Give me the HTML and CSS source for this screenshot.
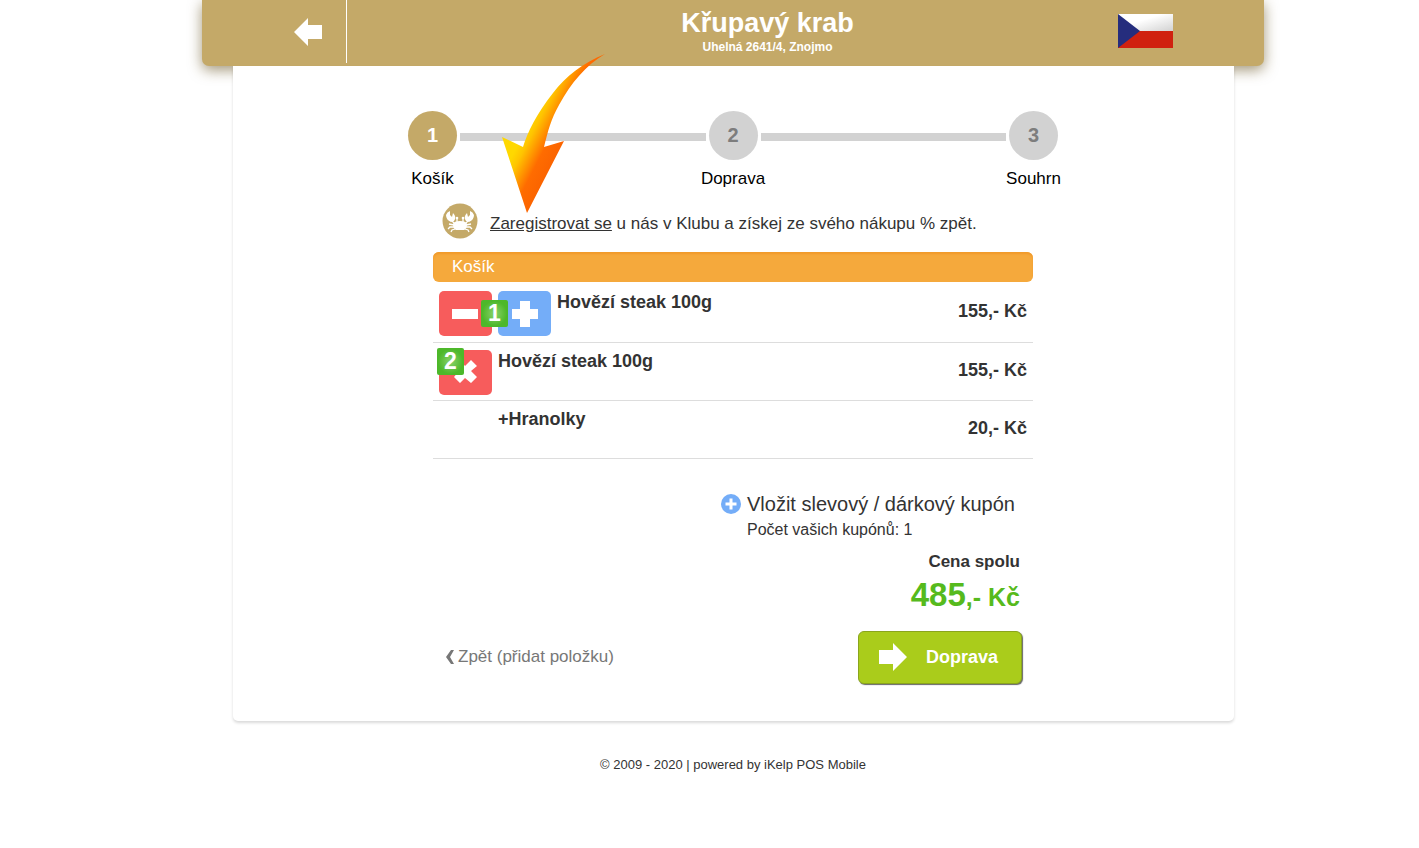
FILE: index.html
```html
<!DOCTYPE html>
<html lang="cs">
<head>
<meta charset="UTF-8">
<meta name="viewport" content="width=device-width, initial-scale=1.0">
<title>Křupavý krab - Košík</title>
<link rel="stylesheet" href="styles.css">
</head>
<body>

<header class="top">
    <a class="top-back" href="#" aria-label="Zpět">
        <svg width="30" height="28" viewBox="0 0 30 28"><path fill="#fff" d="M1 14 15 0V7H29V21H15V28Z"/></svg>
    </a>
    <div class="top-title">
        <h1>Křupavý krab</h1>
        <p>Uhelná 2641/4, Znojmo</p>
    </div>
    <button class="flag" type="button" aria-label="Čeština">
        <svg width="55" height="34" viewBox="0 0 55 34">
            <defs>
                <linearGradient id="flagWhite" x1="0" y1="0" x2="1" y2="1">
                    <stop offset=".4" stop-color="#fff"/>
                    <stop offset="1" stop-color="#d2d2d2"/>
                </linearGradient>
            </defs>
            <path fill="url(#flagWhite)" d="M0 0H55V17H0Z"/>
            <path fill="#d0210f" d="M0 17H55V34H0Z"/>
            <path fill="#252d7d" d="M0 0 22 17 0 34Z"/>
        </svg>
    </button>
</header>

<main class="card">
    <ol class="steps">
        <li class="step active"><span class="num">1</span><span>Košík</span></li>
        <li class="line" aria-hidden="true"></li>
        <li class="step"><span class="num">2</span><span>Doprava</span></li>
        <li class="line" aria-hidden="true"></li>
        <li class="step"><span class="num">3</span><span>Souhrn</span></li>
    </ol>

    <div class="content">
        <!-- arrow pointing at the registration link -->
        <svg class="arrow" width="106" height="160" viewBox="0 0 106 160" aria-hidden="true">
            <defs>
                <linearGradient id="arrowFill" gradientUnits="userSpaceOnUse" x1="51" y1="26" x2="86" y2="44">
                    <stop offset="0" stop-color="#ffd800"/>
                    <stop offset=".2" stop-color="#ffc400"/>
                    <stop offset=".65" stop-color="#ff6c00"/>
                    <stop offset="1" stop-color="#fb6400"/>
                </linearGradient>
            </defs>
            <path fill="url(#arrowFill)" d="M105 0C83 9 66 22 53 39C37 59 27 79 23 93L2 83L27 159L64 87L44 93C48 77 51 65 59 51C71 29 86 11 105 0Z"/>
        </svg>

        <div class="club">
            <svg width="36" height="36" viewBox="0 0 36 36" aria-hidden="true">
                <circle cx="18" cy="18" r="17.5" fill="#c4a968"/>
                <g fill="#fff">
                    <path d="M11 21Q12 18 18 18Q24 18 25 21Q25 26 22 27H14Q11 26 11 21Z"/>
                    <path d="M8 8 8 12 10 14 11 10Q15 14 12 18L9 19Q4 17 4 12Q5 9 8 8Z"/>
                    <path d="M28 8 28 12 26 14 25 10Q21 14 24 18L27 19Q32 17 32 12Q31 9 28 8Z"/>
                    <circle cx="15" cy="15" r="1.3"/>
                    <circle cx="21" cy="15" r="1.3"/>
                </g>
                <g fill="none" stroke="#fff" stroke-width="1.3">
                    <path d="M10 18 13 21M26 18 23 21M12 22 7 21M24 22 29 21M12 24 8 24 6 26M24 24 28 24 30 26M13 26 10 27 9 29M23 26 26 27 27 29M15 15V19M21 15V19"/>
                </g>
            </svg>
            <p><a href="#">Zaregistrovat se</a> u nás v Klubu a získej ze svého nákupu % zpět.</p>
        </div>

        <h2 class="bar">Košík</h2>

        <table class="items">
            <tr>
                <td>
                    <div class="item">
                        <button class="btn red" type="button" aria-label="Ubrat">
                            <svg width="30" height="26" viewBox="0 0 30 26"><path fill="#fff" d="M1 8H27V18H1Z"/></svg>
                        </button>
                        <button class="btn blue" type="button" aria-label="Přidat">
                            <svg width="26" height="26" viewBox="0 0 26 26"><path fill="#fff" d="M8 0H18V8H26V18H18V26H8V18H0V8H8Z"/></svg>
                        </button>
                        <span class="badge between">1</span>
                        <span class="name">Hovězí steak 100g</span>
                    </div>
                </td>
                <td class="price">155,- Kč</td>
            </tr>
            <tr>
                <td>
                    <div class="item">
                        <button class="btn red" type="button" aria-label="Odstranit">
                            <svg width="26" height="26" viewBox="0 0 26 26"><path fill="#fff" d="M7 1 12 7 18 1 24 7 18 12 24 18 18 24 12 19 7 24 1 18 6 12 1 7Z"/></svg>
                        </button>
                        <span class="badge corner">2</span>
                        <span class="name">Hovězí steak 100g</span>
                    </div>
                </td>
                <td class="price">155,- Kč</td>
            </tr>
            <tr>
                <td>
                    <div class="item extra"><span class="name">+Hranolky</span></div>
                </td>
                <td class="price">20,- Kč</td>
            </tr>
        </table>

        <div class="coupon">
            <button class="coupon-add" type="button">
                <svg width="20" height="20" viewBox="0 0 20 20" aria-hidden="true"><circle cx="10" cy="10" r="10" fill="#74adf8"/><path fill="#fff" d="M8.500 4.500h3v4h4v3h-4v4h-3v-4h-4v-3h4z"/></svg>
                Vložit slevový / dárkový kupón
            </button>
            <p>Počet vašich kupónů: 1</p>
        </div>

        <div class="total">
            <p>Cena spolu</p>
            <p class="sum"><span>485</span>,- Kč</p>
        </div>

        <div class="actions">
            <a class="back" href="#">
                <svg width="8" height="14" viewBox="0 0 8 14" aria-hidden="true"><path fill="#777" d="M5 0H8L4 7L8 14H5L0 7Z"/></svg>
                Zpět (přidat položku)
            </a>
            <button class="next" type="button">
                <svg width="28" height="28" viewBox="0 0 28 28" aria-hidden="true"><path fill="#fff" d="M28 14 14 0V7H0V21H14V28Z"/></svg>
                Doprava
            </button>
        </div>
    </div>
</main>

<footer>© 2009 - 2020 | powered by iKelp POS Mobile</footer>

</body>
</html>
```
FILE: styles.css
```css
* {
    box-sizing: border-box;
}

body {
    margin: 0;
    padding-left: 47px;
    background: #fff;
    color: #333;
    font-family: "Liberation Sans", Arial, sans-serif;
    font-size: 17px;
    line-height: 20px;
}

h1, h2, p, ol {
    margin: 0;
    padding: 0;
}

button {
    margin: 0;
    padding: 0;
    border: 0;
    background: none;
    color: inherit;
    font: inherit;
    cursor: pointer;
}

svg {
    display: block;
    flex: none;
}

/* header */
.top {
    display: grid;
    grid-template-columns: 145px 1fr 146px;
    max-width: 1062px;
    height: 66px;
    margin: 0 auto;
    background: #c4a968;
    border-radius: 0 0 7px 7px;
    box-shadow: 0 4px 14px rgba(100, 80, 30, .6);
    color: #fff;
}

.top-back {
    display: flex;
    align-items: center;
    justify-content: flex-end;
    height: 63px;
    padding-right: 23px;
    border-right: 1px solid #fff;
}

.top-title {
    padding: 7px 0 0 70px;
    text-align: center;
    font-weight: bold;
}

.top-title h1 {
    font-size: 27px;
    line-height: 32px;
}

.top-title p {
    font-size: 12px;
    line-height: 16px;
}

.flag {
    align-self: start;
    justify-self: start;
    margin-top: 14px;
}

/* card */
.card {
    position: relative;
    max-width: 1001px;
    margin: 0 auto;
    padding: 45px 20px 37px;
    background: #fff;
    border-radius: 0 0 5px 5px;
    box-shadow: 0 2px 3px rgba(0, 0, 0, .15);
}

.steps {
    display: flex;
    max-width: 650px;
    margin: 0 auto;
    list-style: none;
    color: #000;
}

.step {
    display: flex;
    flex-direction: column;
    align-items: center;
    gap: 9px;
    width: 49px;
    white-space: nowrap;
}

.num {
    width: 49px;
    height: 49px;
    border-radius: 50%;
    background: #d2d2d2;
    color: #7d7d7d;
    font-size: 20px;
    font-weight: bold;
    line-height: 49px;
    text-align: center;
}

.active .num {
    background: #c4a968;
    color: #fff;
}

.line {
    flex: 1;
    height: 8px;
    margin: 22px 3px 0;
    background: #d2d2d2;
}

.content {
    position: relative;
    display: flex;
    flex-direction: column;
    max-width: 600px;
    margin: 0 auto;
}

.arrow {
    position: absolute;
    top: -135px;
    left: 67px;
    pointer-events: none;
}

.club {
    display: flex;
    align-items: center;
    gap: 12px;
    margin: 14px 0 13px;
    padding-left: 9px;
}

.club p {
    padding-top: 5px;
}

.club a {
    color: inherit;
}

.bar {
    padding: 5px 19px;
    border-radius: 6px;
    background: #f5a93c;
    box-shadow: inset 0 2px 2px #f19a2b;
    color: #fff;
    font-size: 17px;
    font-weight: normal;
}

/* cart items */
.items {
    width: 100%;
    margin-top: 2px;
    border-collapse: collapse;
    font-size: 18px;
    font-weight: bold;
}

.items tr {
    height: 58px;
}

.items td {
    padding: 7px 6px 5px;
    border-bottom: 1px solid #ddd;
}

.items .price {
    padding-bottom: 10px;
    text-align: right;
    white-space: nowrap;
}

.item {
    position: relative;
    display: flex;
    gap: 6px;
    min-height: 45px;
}

.name {
    padding-top: 1px;
}

.extra {
    padding-left: 59px;
}

.btn {
    display: flex;
    align-items: center;
    justify-content: center;
    width: 53px;
    height: 45px;
    border-radius: 5px;
}

.red {
    background: #f75c5c;
}

.blue {
    background: #74adf8;
}

.badge {
    position: absolute;
    width: 27px;
    height: 27px;
    border-radius: 2px;
    background: radial-gradient(circle, #7dcc5c 15%, #4db82a 65%);
    color: #fff;
    font-size: 23px;
    line-height: 27px;
    text-align: center;
}

.between {
    top: 9px;
    left: 42px;
}

.corner {
    top: -2px;
    left: -2px;
}

/* summary */
.coupon {
    align-self: flex-end;
    width: 312px;
    margin-top: 33px;
}

.coupon-add {
    display: flex;
    align-items: center;
    gap: 6px;
    font-size: 20px;
    line-height: 24px;
    white-space: nowrap;
}

.coupon p {
    margin-top: 4px;
    padding-left: 26px;
    font-size: 16px;
}

.total {
    margin: 12px 13px 0 0;
    text-align: right;
    font-weight: bold;
}

.sum {
    margin-top: 4px;
    color: #56ba1d;
    font-size: 25px;
    line-height: 38px;
}

.sum span {
    font-size: 33px;
}

.actions {
    display: flex;
    align-items: center;
    justify-content: space-between;
    margin-top: 15px;
    padding: 0 11px 0 13px;
}

.back {
    display: flex;
    align-items: center;
    gap: 4px;
    color: #777;
    text-decoration: none;
}

.next {
    display: flex;
    align-items: center;
    gap: 19px;
    height: 53px;
    padding: 0 23px 0 20px;
    border: 1px solid #8aa51c;
    border-radius: 6px;
    background: #aacc1b;
    box-shadow: 1px 1px 1px #666;
    color: #fff;
    font-size: 18px;
    font-weight: bold;
}

footer {
    padding: 34px 0;
    font-size: 13px;
    text-align: center;
}
```
